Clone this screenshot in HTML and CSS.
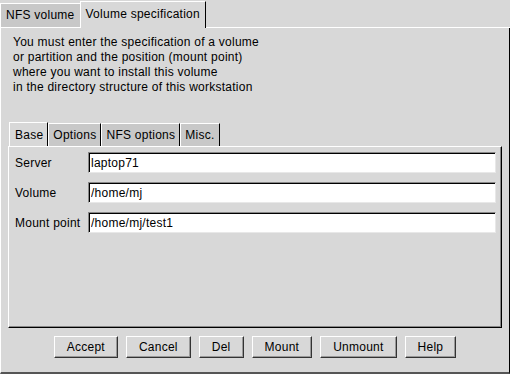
FILE: index.html
```html
<!DOCTYPE html>
<html lang="en">
<head>
  <meta charset="UTF-8" />
  <title>Volume specification</title>
  <link rel="stylesheet" href="styles.css">
</head>
<body>
  <div class="window">
    <div class="tabbar">
      <div class="tab">NFS volume</div>
      <div class="tab active">Volume specification</div>
      <div class="tab-fill"></div>
    </div>

    <div class="page">
      <p class="intro">
        You must enter the specification of a volume<br>
        or partition and the position (mount point)<br>
        where you want to install this volume<br>
        in the directory structure of this workstation
      </p>

      <div class="subtabs">
        <div class="subtab active">Base</div>
        <div class="subtab">Options</div>
        <div class="subtab">NFS options</div>
        <div class="subtab">Misc.</div>
      </div>

      <div class="panel">
        <div class="row">
          <label>Server</label>
          <input type="text" value="laptop71">
        </div>
        <div class="row">
          <label>Volume</label>
          <input type="text" value="/home/mj">
        </div>
        <div class="row">
          <label>Mount point</label>
          <input type="text" value="/home/mj/test1">
        </div>
      </div>

      <div class="buttons">
        <button>Accept</button>
        <button>Cancel</button>
        <button>Del</button>
        <button>Mount</button>
        <button>Unmount</button>
        <button>Help</button>
      </div>
    </div>
  </div>
</body>
</html>
```

FILE: styles.css
```css
body {
  margin: 0;
  background: #d8d8d8;
  font-family: "Liberation Sans", Arial, sans-serif;
  font-size: 12px;
  letter-spacing: 0.25px;
  color: #000;
}

.window {
  width: 510px;
  height: 374px;
  display: flex;
  flex-direction: column;
  background: #d8d8d8;
}

/* outer notebook tabs */
.tabbar {
  display: flex;
  align-items: flex-end;
  height: 28px;
}

.tab {
  height: 23px;
  line-height: 23px;
  padding: 0 5px;
  background: #c8c8c8;
  border-top: 1px solid #fff;
  border-left: 1px solid #fff;
  border-bottom: 1px solid #fff;
}

.tab.active {
  height: 26px;
  line-height: 24px;
  background: #d8d8d8;
  border-bottom: none;
  border-right: 1px solid #000;
  padding: 0 5px 0 5px;
}

.tab-fill {
  flex: 1;
  align-self: stretch;
  border-bottom: 1px solid #fff;
}

.page {
  flex: 1;
  display: flex;
  flex-direction: column;
  border-left: 1px solid #fff;
  border-right: 1px solid #000;
  border-bottom: 2px solid #555;
}

.intro {
  margin: 7px 0 0 12px;
  line-height: 15px;
}

/* inner tabs */
.subtabs {
  display: flex;
  margin: 27px 0 0 8px;
  height: 24px;
  align-items: flex-end;
}

.subtab {
  height: 22px;
  line-height: 22px;
  padding: 0 4px;
  background: #c8c8c8;
  border-top: 1px solid #fff;
  border-left: 1px solid #fff;
  border-right: 1px solid #000;
}

.subtab.active {
  height: 23px;
  line-height: 24px;
  background: #d8d8d8;
  padding: 0 4px 0 5px;
}

.panel {
  margin: 0 7px 0 7px;
  height: 175px;
  padding: 5px 5px 0 6px;
  border-top: 1px solid #fff;
  border-left: 1px solid #fff;
  border-right: 1px solid #000;
  border-bottom: 1px solid #000;
  box-shadow: inset -1px -1px 0 #888;
  display: flex;
  flex-direction: column;
  gap: 9px;
}

.row {
  display: flex;
  align-items: center;
}

.row label {
  width: 73px;
}

.row input {
  flex: 1;
  height: 21px;
  box-sizing: border-box;
  margin: 0;
  padding: 0 0 0 2px;
  font: inherit;
  letter-spacing: inherit;
  color: #000;
  background: #fff;
  border: 1px solid;
  border-color: #888 #e8e8e8 #e8e8e8 #888;
  box-shadow: inset 1px 1px 0 #000;
  outline: none;
}

.buttons {
  display: flex;
  justify-content: center;
  gap: 8px;
  margin-top: 8px;
}

.buttons button {
  height: 22px;
  padding: 0 12px;
  font: inherit;
  letter-spacing: inherit;
  color: #000;
  background: #d8d8d8;
  border: 1px solid;
  border-color: #fff #333 #333 #fff;
  box-shadow: inset -1px -1px 0 #999;
}
```
